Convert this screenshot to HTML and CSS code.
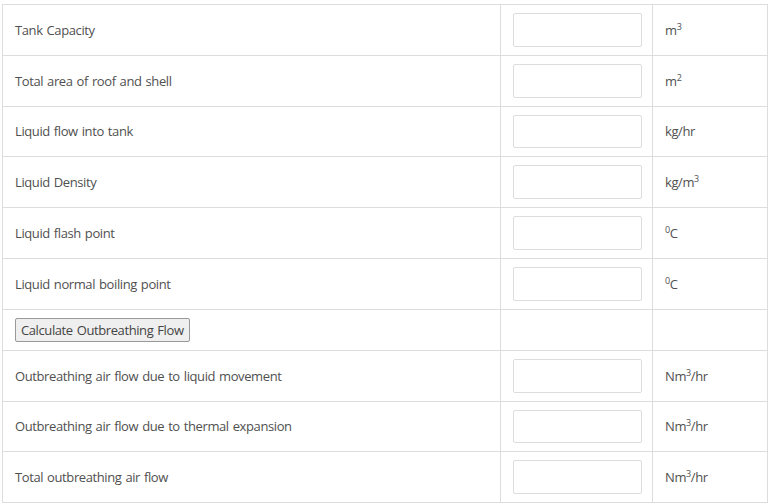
FILE: index.html
```html
<!DOCTYPE html>
<html lang="en">
<head>
    <meta charset="UTF-8">
    <meta name="viewport" content="width=device-width, initial-scale=1.0">
    <title>Tank Outbreathing</title>
    <link rel="stylesheet" href="styles.css">
</head>
<body>

    <table class="calc-table">
        <tr>
            <td class="label">Tank Capacity</td>
            <td class="field"><input type="text" id="capacity"></td>
            <td class="unit">m<sup>3</sup></td>
        </tr>
        <tr>
            <td class="label">Total area of roof and shell</td>
            <td class="field"><input type="text" id="area"></td>
            <td class="unit">m<sup>2</sup></td>
        </tr>
        <tr>
            <td class="label">Liquid flow into tank</td>
            <td class="field"><input type="text" id="flow"></td>
            <td class="unit">kg/hr</td>
        </tr>
        <tr>
            <td class="label">Liquid Density</td>
            <td class="field"><input type="text" id="density"></td>
            <td class="unit">kg/m<sup>3</sup></td>
        </tr>
        <tr>
            <td class="label">Liquid flash point</td>
            <td class="field"><input type="text" id="flash"></td>
            <td class="unit"><sup>0</sup>C</td>
        </tr>
        <tr>
            <td class="label">Liquid normal boiling point</td>
            <td class="field"><input type="text" id="boiling"></td>
            <td class="unit"><sup>0</sup>C</td>
        </tr>
        <tr class="button-row">
            <td class="label"><button onclick="calculate()">Calculate Outbreathing Flow</button></td>
            <td class="field"></td>
            <td class="unit"></td>
        </tr>
        <tr>
            <td class="label">Outbreathing air flow due to liquid movement</td>
            <td class="field"><input type="text" id="liquidOut" readonly></td>
            <td class="unit">Nm<sup>3</sup>/hr</td>
        </tr>
        <tr>
            <td class="label">Outbreathing air flow due to thermal expansion</td>
            <td class="field"><input type="text" id="thermalOut" readonly></td>
            <td class="unit">Nm<sup>3</sup>/hr</td>
        </tr>
        <tr>
            <td class="label">Total outbreathing air flow</td>
            <td class="field"><input type="text" id="totalOut" readonly></td>
            <td class="unit">Nm<sup>3</sup>/hr</td>
        </tr>
    </table>

    <script>
        // Rough outbreathing estimate (API 2000 style)
        function calculate() {
            const flow = parseFloat(document.getElementById('flow').value);
            const density = parseFloat(document.getElementById('density').value);
            const capacity = parseFloat(document.getElementById('capacity').value);
            const flash = parseFloat(document.getElementById('flash').value);
            const boiling = parseFloat(document.getElementById('boiling').value);

            if (isNaN(flow) || isNaN(density) || isNaN(capacity)) return;

            const volFlow = flow / density;
            const volatile = flash < 37.8 || boiling < 149;
            const liquidOut = volatile ? volFlow * 2.02 : volFlow * 1.01;
            const thermalOut = 0.6 * Math.pow(capacity, 0.9);

            document.getElementById('liquidOut').value = liquidOut.toFixed(2);
            document.getElementById('thermalOut').value = thermalOut.toFixed(2);
            document.getElementById('totalOut').value = (liquidOut + thermalOut).toFixed(2);
        }
    </script>

</body>
</html>
```

FILE: styles.css
```css
body {
    margin: 0;
    padding: 4px 0 0 2px;
    font-family: "Open Sans", Arial, sans-serif;
    font-size: 13px;
    letter-spacing: -0.4px;
    word-spacing: 1px;
    color: #505050;
    background-color: white;
}

.calc-table {
    width: 766px;
    table-layout: fixed;
    border-collapse: collapse;
    border: 1px solid #ddd;
}

.calc-table td {
    border: 1px solid #ddd;
    padding: 8px 12px;
    height: 33.8px;
    vertical-align: middle;
}

.calc-table .label {
    width: 473px;
}

.calc-table .field {
    width: 129px;
    padding-right: 10px;
}

.button-row td {
    height: 24px;
}

input {
    display: block;
    box-sizing: border-box;
    width: 129px;
    height: 33.8px;
    border: 1px solid #ddd;
    border-radius: 2px;
    padding: 4px 6px;
    font-family: inherit;
    font-size: 13px;
}

sup {
    font-size: 9px;
    line-height: 0;
}

button {
    font-family: "Open Sans", Arial, sans-serif;
    font-size: 13px;
    letter-spacing: -0.4px;
    word-spacing: 1px;
    color: #444;
    background-color: #efefef;
    border: 1px solid #999;
    border-radius: 2px;
    padding: 0 5px;
    height: 24px;
    cursor: pointer;
}

button:hover {
    background-color: #e5e5e5;
}
```
